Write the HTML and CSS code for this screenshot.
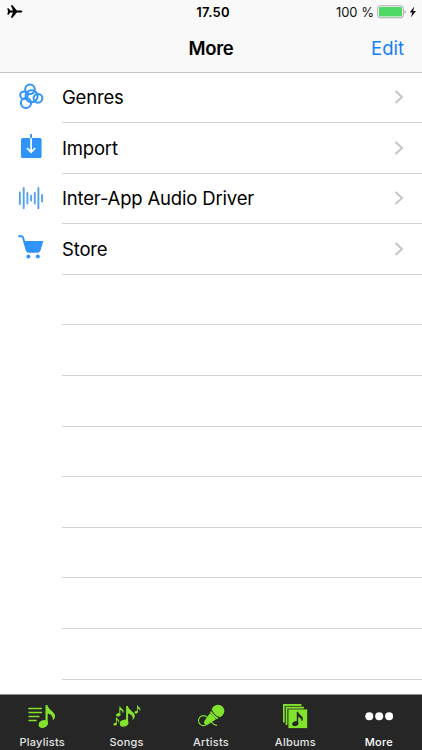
FILE: index.html
```html
<!DOCTYPE html>
<html lang="en">
<head>
    <meta charset="UTF-8" />
    <title>More</title>
    <meta name="viewport" content="width=device-width, initial-scale=1">
    <link rel="stylesheet" href="styles.css">
</head>
<body>

<svg width="0" height="0" class="defs">
  <symbol id="chevron" viewBox="0 0 10 16">
    <path d="M1.5 2L8 8L1.5 14" fill="none" stroke="#c5c5ca" stroke-width="2"/>
  </symbol>
  <symbol id="note" viewBox="0 0 17 23">
    <ellipse cx="4.7" cy="19" rx="4.9" ry="3.8" transform="rotate(-20 4.7 19)"/>
    <path d="M7 0H8.9C9.4 4.5 16.8 7 16.6 11.3C16.5 13.3 15.1 15 14.1 15.5C15.1 11.4 12.3 9.2 9.2 8.5V19H7Z"/>
  </symbol>
</svg>

<header>
  <div class="status">
    <svg class="plane" width="16" height="13" viewBox="0 0 16 14" preserveAspectRatio="none">
      <path d="M15.3 7C15.3 6.2 14.5 5.9 13.5 5.9H9.8L5.5 .3H3.8L6 5.9H3.4L1.6 3.5H.3L1 7L.3 10.5H1.6L3.4 8.1H6L3.8 13.7H5.5L9.8 8.1H13.5C14.5 8.1 15.3 7.8 15.3 7Z"/>
    </svg>
    <span class="time">17.50</span>
    <span class="percent">100 %</span>
    <svg class="battery" width="40" height="14" viewBox="0 0 40 14">
      <rect x=".7" y=".8" width="25.6" height="12" rx="2.6" fill="#fff" stroke="#a5a3a7" stroke-width="1"/>
      <rect x="2" y="2.1" width="23" height="9.4" rx="1.2" fill="#4cd964"/>
      <path d="M27.7 5V8.8C29 8.4 29 5.4 27.7 5Z" fill="#8e8e93"/>
      <path d="M37.2 1.4L32.7 7.5H35.2L34 12.2L39 5.9H36.2Z" fill="#111"/>
    </svg>
  </div>
  <div class="navbar">
    <h1>More</h1>
    <a class="edit">Edit</a>
  </div>
</header>

<ul class="list">
  <li>
    <svg class="icon" width="26" height="28" viewBox="0 0 26 28">
      <g fill="none" stroke="#3194fb" stroke-width="2">
        <circle cx="12" cy="6.3" r="4.8"/>
        <circle cx="6" cy="12.2" r="3.8"/>
        <circle cx="13.6" cy="13.2" r="6"/>
        <circle cx="20" cy="15.3" r="4.4"/>
        <circle cx="8" cy="20" r="5.1"/>
      </g>
    </svg>
    <div class="cell"><span>Genres</span><svg width="10" height="16"><use href="#chevron"/></svg></div>
  </li>
  <li>
    <svg class="icon" width="26" height="28" viewBox="0 0 26 28">
      <rect x="3" y="4" width="20.6" height="20" rx="1.5" fill="#3194fb"/>
      <path d="M13.1 0V4" stroke="#3194fb" stroke-width="1.8"/>
      <path d="M13.1 4V18.2M9 14L13.1 18.2L17.2 14" fill="none" stroke="#fff" stroke-width="1.7"/>
    </svg>
    <div class="cell"><span>Import</span><svg width="10" height="16"><use href="#chevron"/></svg></div>
  </li>
  <li>
    <svg class="icon" width="26" height="28" viewBox="0 0 26 28">
      <path d="M1.9 7.5V19M5.7 3V23.3M9.4 8V18.5M13.1 10.8V15.5M16.8 8V18.5M20.4 3V23.3M24.1 10V16.5" stroke="#55a2f0" stroke-width="1.9" stroke-linecap="round"/>
    </svg>
    <div class="cell"><span>Inter-App Audio Driver</span><svg width="10" height="16"><use href="#chevron"/></svg></div>
  </li>
  <li>
    <svg class="icon" width="26" height="28" viewBox="0 0 26 28">
      <path d="M.3 1.2H3.4Q4.6 1.2 5 2.5L8.4 14.2Q9 16.6 11 16.6H20" fill="none" stroke="#3194fb" stroke-width="1.9"/>
      <path d="M5.7 5.9H25.3L22.5 15.6Q22 17.4 20.5 17.4H10.5Q8.8 17.4 8.3 15.6Z" fill="#3194fb"/>
      <circle cx="10.4" cy="21.4" r="2" fill="#3194fb"/>
      <circle cx="19.8" cy="21.4" r="2" fill="#3194fb"/>
    </svg>
    <div class="cell"><span>Store</span><svg width="10" height="16"><use href="#chevron"/></svg></div>
  </li>
  <li><div class="cell"></div></li>
  <li><div class="cell"></div></li>
  <li><div class="cell"></div></li>
  <li><div class="cell"></div></li>
  <li><div class="cell"></div></li>
  <li><div class="cell"></div></li>
  <li><div class="cell"></div></li>
  <li><div class="cell"></div></li>
</ul>

<footer>
  <div class="tab">
    <svg width="30" height="28" viewBox="0 0 30 28" fill="#82e32b">
      <path d="M1.3 5.5H15M1.5 9.5H15M1.5 13.5H12.5M1.5 17.5H9.7" stroke="#82e32b" stroke-width="1.5"/>
      <use href="#note" x="11.5" y="2" width="17" height="23"/>
    </svg>
    <span>Playlists</span>
  </div>
  <div class="tab">
    <svg width="30" height="28" viewBox="0 0 30 28" fill="#82e32b">
      <use href="#note" x="7.7" y="2.8" width="15.5" height="21"/>
      <use href="#note" x="4" y="3.2" width="8" height="10.5"/>
      <use href="#note" x="1.3" y="14.2" width="6.3" height="8.5"/>
      <use href="#note" x="22.3" y="2.3" width="6.5" height="8.5"/>
    </svg>
    <span>Songs</span>
  </div>
  <div class="tab">
    <svg width="30" height="28" viewBox="0 0 30 28" fill="#82e32b">
      <g transform="translate(-.3 .6)">
        <circle cx="7.8" cy="17" r="5" fill="none" stroke="#82e32b" stroke-width="1.1"/>
        <path d="M15.5 18.2Q17.3 21.2 21.3 21.8" fill="none" stroke="#82e32b" stroke-width="1.1"/>
        <path d="M14.2 9.6L20.4 15.6L12.3 21Q10.8 21.8 9 20.4Q7.6 18.8 8.7 17.3Z"/>
        <circle cx="22.3" cy="7.4" r="6.3"/>
        <path d="M15.8 6.6Q17.8 11.6 23.2 14" fill="none" stroke="#262626" stroke-width="1.1"/>
        <path d="M14.9 8Q17.2 12.6 22 15" fill="none" stroke="#82e32b" stroke-width="1.8"/>
      </g>
    </svg>
    <span>Artists</span>
  </div>
  <div class="tab">
    <svg width="30" height="28" viewBox="0 0 30 28" fill="#82e32b">
      <rect x="3" y="1" width="18.4" height="18.5"/>
      <rect x="4.7" y="2.9" width="20" height="20" fill="#262626"/>
      <rect x="5.7" y="3.7" width="18.2" height="18.3"/>
      <rect x="7.4" y="5.6" width="20" height="20" fill="#262626"/>
      <rect x="8.4" y="6.4" width="18.8" height="18.7"/>
      <use href="#note" x="12" y="8.5" width="11.5" height="14.8" fill="#262626"/>
    </svg>
    <span>Albums</span>
  </div>
  <div class="tab active">
    <svg width="30" height="28" viewBox="0 0 30 28" fill="#fff">
      <circle cx="4.3" cy="13.2" r="4"/>
      <circle cx="14.2" cy="13.2" r="4"/>
      <circle cx="24.1" cy="13.2" r="4"/>
    </svg>
    <span>More</span>
  </div>
</footer>

</body>
</html>
```

FILE: styles.css
```css
* {
  box-sizing: border-box;
}

body {
  margin: 0;
  height: 750px;
  overflow: hidden;
  display: flex;
  flex-direction: column;
  font-family: Inter, "Liberation Sans", sans-serif;
  color: #000;
  background: #fff;
}

.defs {
  position: absolute;
}

/* Status bar and title */
header {
  flex: none;
  height: 73px;
  background: #f9f9f9;
  border-bottom: 1px solid #c4c4c4;
}

.status {
  display: grid;
  grid-template-columns: 176px 60px 1fr 43px;
  align-items: center;
  height: 24px;
  padding: 0 4px 0 7px;
  font-size: 13px;
}

.plane {
  margin-bottom: 1px;
}

.time {
  text-align: center;
  font-weight: 600;
  font-size: 13px;
  letter-spacing: 0.3px;
}

.percent {
  text-align: right;
  color: #111;
  padding-right: 1px;
}

.battery {
  margin-left: 2px;
}

.navbar {
  display: grid;
  grid-template-columns: 1fr auto 1fr;
  align-items: center;
  height: 47.4px;
  padding: 0 18px;
}

h1 {
  grid-column: 2;
  margin: 0;
  font-size: 18.5px;
  font-weight: 600;
  letter-spacing: -0.3px;
}

.edit {
  justify-self: end;
  font-size: 18.5px;
  color: #167efb;
}

/* Table rows */
.list {
  flex: 1;
  min-height: 0;
  margin: -0.6px 0 0;
  padding: 0;
  list-style: none;
}

.list li {
  display: flex;
  justify-content: flex-end;
  height: 50.6px;
}

.icon {
  flex: none;
  margin: 11px 18px 0 18px;
}

.cell {
  flex: none;
  display: flex;
  justify-content: space-between;
  align-items: center;
  width: 360px;
  padding-right: 18px;
  border-bottom: 1px solid #d3d3d5;
  font-size: 18.5px;
  letter-spacing: -0.18px;
}

/* Tab bar */
footer {
  flex: none;
  display: flex;
  height: 56px;
  background: #262626;
  border-top: 1px solid #8d8f8e;
}

.tab {
  flex: 1;
  display: flex;
  flex-direction: column;
  align-items: center;
  padding-top: 8px;
  font-size: 11px;
  font-weight: 500;
  line-height: 14px;
  letter-spacing: 0.25px;
  color: #e4e4e4;
}

.tab span {
  margin-top: 4px;
}

.active {
  color: #fff;
}

.active span {
  margin-right: 2px;
}
```
